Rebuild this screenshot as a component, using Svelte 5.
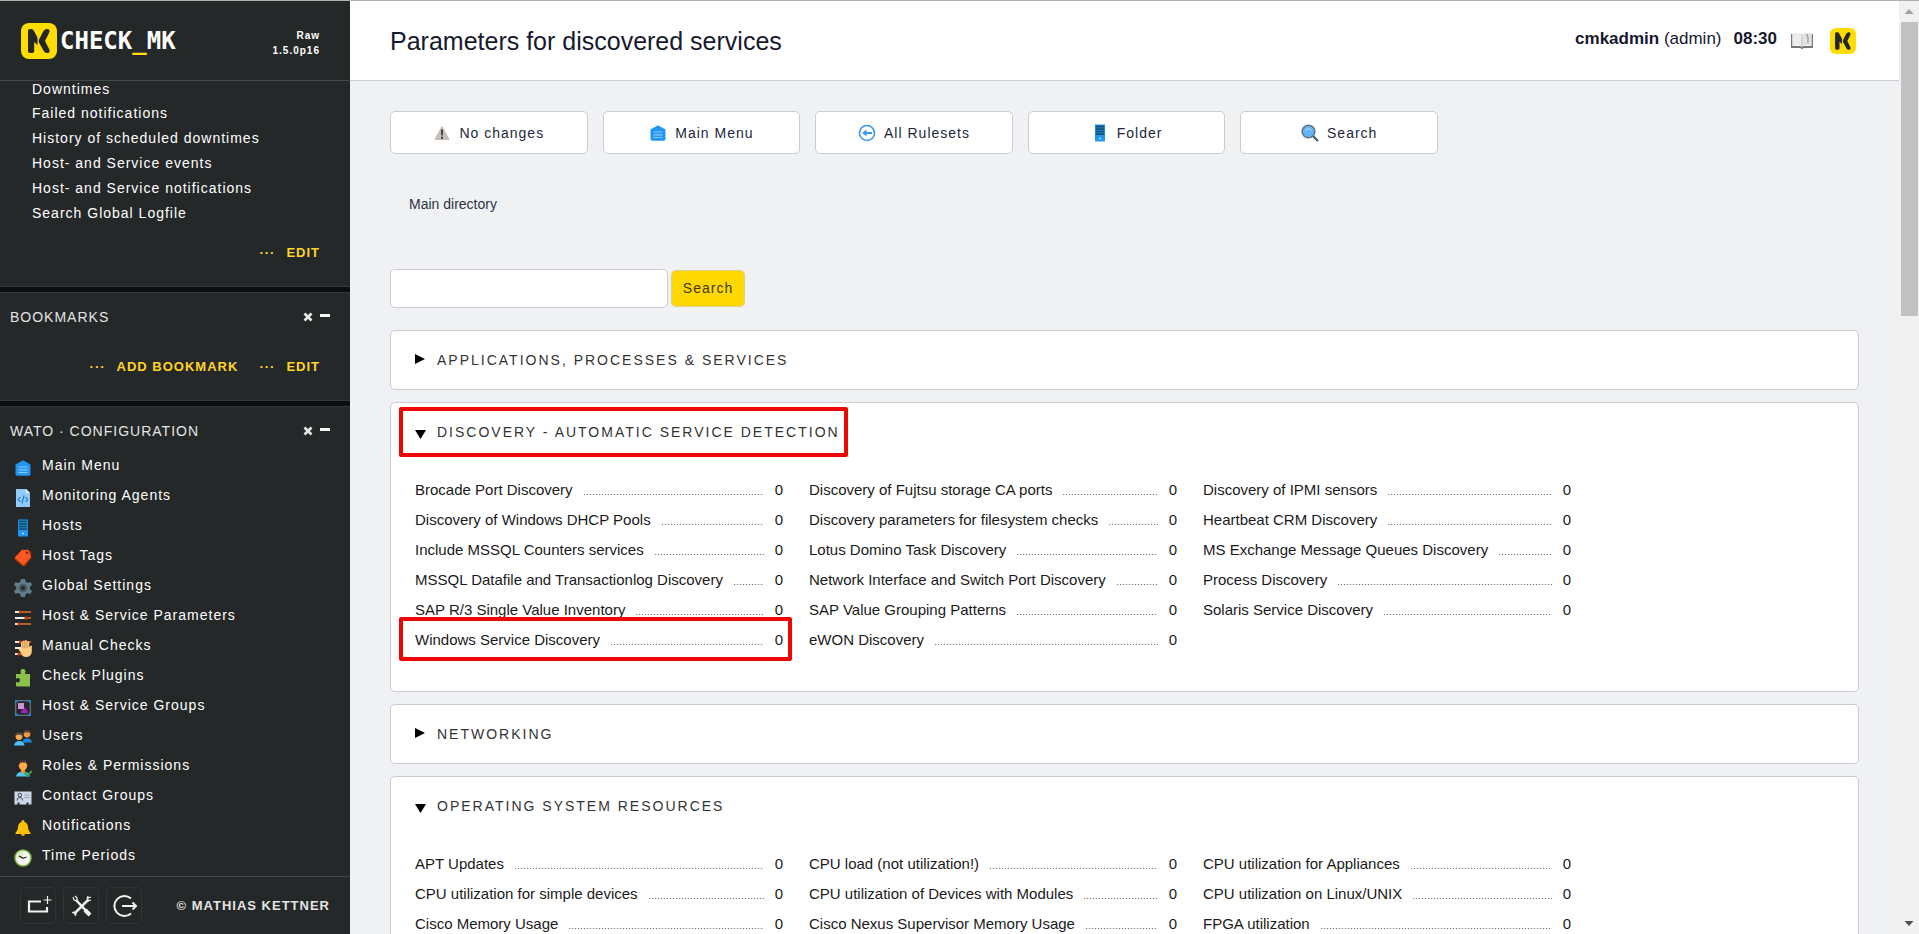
<script>
  const views = [
    'Downtimes',
    'Failed notifications',
    'History of scheduled downtimes',
    'Host- and Service events',
    'Host- and Service notifications',
    'Search Global Logfile'
  ];

  const wato = [
    ['menu', 'Main Menu'],
    ['agent', 'Monitoring Agents'],
    ['host', 'Hosts'],
    ['tag', 'Host Tags'],
    ['gear', 'Global Settings'],
    ['params', 'Host & Service Parameters'],
    ['manual', 'Manual Checks'],
    ['plugin', 'Check Plugins'],
    ['groups', 'Host & Service Groups'],
    ['users', 'Users'],
    ['roles', 'Roles & Permissions'],
    ['contact', 'Contact Groups'],
    ['bell', 'Notifications'],
    ['clock', 'Time Periods']
  ];

  const actions = [
    ['warning', 'No changes'],
    ['menu', 'Main Menu'],
    ['back', 'All Rulesets'],
    ['host', 'Folder'],
    ['search', 'Search']
  ];

  const panels = [
    { title: 'Applications, Processes & Services', open: false, rules: [] },
    {
      title: 'Discovery - automatic service detection',
      open: true,
      marked: true,
      rules: [
        'Brocade Port Discovery',
        'Discovery of Fujtsu storage CA ports',
        'Discovery of IPMI sensors',
        'Discovery of Windows DHCP Pools',
        'Discovery parameters for filesystem checks',
        'Heartbeat CRM Discovery',
        'Include MSSQL Counters services',
        'Lotus Domino Task Discovery',
        'MS Exchange Message Queues Discovery',
        'MSSQL Datafile and Transactionlog Discovery',
        'Network Interface and Switch Port Discovery',
        'Process Discovery',
        'SAP R/3 Single Value Inventory',
        'SAP Value Grouping Patterns',
        'Solaris Service Discovery',
        'Windows Service Discovery',
        'eWON Discovery'
      ]
    },
    { title: 'Networking', open: false, rules: [] },
    {
      title: 'Operating System Resources',
      open: true,
      rules: [
        'APT Updates',
        'CPU load (not utilization!)',
        'CPU utilization for Appliances',
        'CPU utilization for simple devices',
        'CPU utilization of Devices with Modules',
        'CPU utilization on Linux/UNIX',
        'Cisco Memory Usage',
        'Cisco Nexus Supervisor Memory Usage',
        'FPGA utilization'
      ]
    }
  ];
</script>

{#snippet badge()}
  <svg class="badge" viewBox="0 0 36 36" aria-hidden="true">
    <rect width="36" height="36" rx="8" fill="#ffdd00" />
    <path d="M7 8Q7 6 9 6H10.500Q12 6 12.700 7.500L16.500 14.500V22L13.200 19V28Q13.200 30 11.200 30H9Q7 30 7 28Z" fill="#252628" />
    <path d="M27 6Q29.500 7.500 28 10L24 18L28.300 26.500Q29.500 29 27 30Q24 30.500 22.700 28L18 19.500Q17.300 18 18 16.500L22.500 8Q24 5.500 27 6Z" fill="#252628" />
  </svg>
{/snippet}

{#snippet icon(name)}
  <svg class="icon" viewBox="0 0 18 18" aria-hidden="true">
    {#if name === 'menu'}
      <path d="M1.500 5.500L9 1.200L16.500 5.500V15Q16.500 16.800 14.700 16.800H3.300Q1.500 16.800 1.500 15Z" fill="#2196f3" />
      <path d="M4.500 8H13.500M4.500 10.800H13.500M4.500 13.500H13.500" stroke="#90caf9" stroke-width="1.200" />
    {:else if name === 'agent'}
      <path d="M2 0H12L16 4V18H2Z" fill="#90caf9" />
      <path d="M12 0V4H16Z" fill="#e1f5fe" />
      <path d="M6.500 8L4.200 10.500L6.500 13M11.500 8L13.800 10.500L11.500 13M10 6.500L8 14.500" fill="none" stroke="#1976d2" stroke-width="1.100" />
    {:else if name === 'host'}
      <path d="M4 0.500H14V17.500H4Z" fill="#2196f3" />
      <path d="M4.800 1.500H13.200V3.500H4.800ZM4.800 4.300H13.200V6H4.800ZM4.800 6.800H13.200V8.500H4.800ZM4.800 9.300H13.200V11H4.800Z" fill="#17516f" />
      <circle cx="9" cy="14.500" r="1" fill="#bbdefb" />
    {:else if name === 'tag'}
      <path d="M8.500 1L14.500 0.500L17 3.500L17.200 9L10.500 17.500L8.500 17L0.800 10.500V8.500Z" fill="#bf360c" />
      <path d="M8 0.800L14.500 1.200L16.800 8L9.500 16L0.800 8.500Z" fill="#ff5722" />
      <circle cx="13" cy="3.800" r="1.200" fill="#742408" />
    {:else if name === 'gear'}
      <path d="M7 0H11L11.600 2.800L14 4.100L16.600 3L18 6L15.800 8V10L18 12L16.400 15L13.700 14L11.600 15.200L11 18H7L6.400 15.200L4.200 14L1.500 15L0 12L2.200 10V8L0 6L1.500 3L4.200 4L6.400 2.800Z" fill="#607d8b" />
      <circle cx="9" cy="9" r="4.300" fill="#455a64" />
      <circle cx="9" cy="9" r="2" fill="#252829" />
    {:else if name === 'params' || name === 'manual'}
      <path d="M1 3H7M1 9H12M1 15H5" stroke="#eceff1" stroke-width="1.800" />
      <path d="M7 3H17M12 9H17M5 15H17" stroke="#e0702e" stroke-width="1.500" />
      <path d="M6 1.500V4.500M11.500 7.500V10.500M4.500 13.500V16.500" stroke="#dd2c00" stroke-width="2" />
      {#if name === 'manual'}
        <path d="M7 10V3.500Q7.800 2 8.800 3.500V2Q9.800 0.800 10.800 2V1.500Q12 0.300 13 2V2.500Q14.500 1.500 15.200 3V8L17 6.500Q18.500 7 17.800 8.500V13Q17 18 12 18Q8 18 7 14L4.500 10.500Q5 8.500 7 10Z" fill="#ffcc80" />
        <path d="M8.900 3V9M10.900 2V9M13 2.500V9" stroke="#a1672f" stroke-width=".6" />
      {/if}
    {:else if name === 'plugin'}
      <path d="M2 5H7Q5.500 0 9 0Q12.500 0 11 5H16V17.500H3Q2 17.500 2 16.500V13Q6 14.500 6 11Q6 8 2 9.500Z" fill="#8bc34a" />
    {:else if name === 'groups'}
      <rect x="1.700" y="1.700" width="14.600" height="14.600" fill="#28232e" stroke="#607d8b" stroke-width="1.200" />
      <path d="M1 1H3.500V3.500H1ZM14.500 1H17V3.500H14.500ZM1 14.500H3.500V17H1ZM14.500 14.500H17V17H14.500Z" fill="#1e88d2" />
      <rect x="4" y="4" width="6" height="6" fill="#ce93d8" />
      <path d="M7 14V12L11 8.500L14 12.500V14Z" fill="#9c27b0" />
    {:else if name === 'users'}
      <circle cx="13" cy="5" r="3.400" fill="#ef9a4b" />
      <path d="M9.600 5Q9.500 1 13 1Q16.500 1 16.500 5L15 3.500H11Z" fill="#5d4037" />
      <path d="M8 13.500Q9 9.500 13 9.500Q17.500 9.500 18 13.500Z" fill="#1e88e5" />
      <circle cx="5" cy="7.500" r="3.400" fill="#ffa94d" />
      <path d="M1.600 7.500Q1.500 3.500 5 3.500Q8.500 3.500 8.500 7.500L7 6H3Z" fill="#6d4c41" />
      <path d="M0 16.500Q1 12 5 12Q10 12 10.500 16.500Z" fill="#4fc3f7" />
    {:else if name === 'roles'}
      <path d="M2 17.500Q3 12.500 9 12.500Q15 12.500 16 17.500Z" fill="#4fc3f7" />
      <path d="M7 10H11V13L9 14.500L7 13Z" fill="#ff9800" />
      <ellipse cx="9" cy="6.500" rx="4.200" ry="5" fill="#ffa94d" />
      <path d="M4.800 6Q4.500 0.500 9 0.500Q13.500 0.500 13.200 6L11.500 3.500H7Z" fill="#4e342e" />
      <path d="M10.500 13.500L13.500 16.500L18 12" fill="none" stroke="#43a047" stroke-width="1.800" />
    {:else if name === 'contact'}
      <path d="M0.500 2.500H17.500V15.500H14.500V13.500H12.500V15.500H5.500V13.500H3.500V15.500H0.500Z" fill="#cfd8e8" />
      <circle cx="5.800" cy="6" r="1.800" fill="none" stroke="#37474f" />
      <path d="M3 11.500Q3 8.500 5.800 8.500Q8.600 8.500 8.600 11.500" fill="none" stroke="#37474f" />
      <path d="M10.500 6H15.500M10.500 8.500H15.500" stroke="#90a4ae" stroke-width=".9" />
    {:else if name === 'bell'}
      <path d="M9 1Q10.500 1 10.500 3Q14 4 14 8.500Q14 11.500 16.500 14V15H1.500V14Q4 11.500 4 8.500Q4 4 7.500 3Q7.500 1 9 1Z" fill="#ffc107" />
      <path d="M7 15H11Q11 17 9 17Q7 17 7 15Z" fill="#ffa000" />
    {:else if name === 'clock'}
      <circle cx="9" cy="9" r="8" fill="#f5f5f5" stroke="#7cb342" stroke-width="1.500" />
      <path d="M9 9V1.500A7.500 7.500 0 0 0 1.500 9Z" fill="#dcedc8" />
      <path d="M5 7L9 9.300L12.500 8" fill="none" stroke="#212121" stroke-width="1.300" />
    {:else if name === 'warning'}
      <path d="M9 2.500L16 15.500H2Z" fill="#c4bebb" stroke="#c4bebb" stroke-linejoin="round" />
      <path d="M8 5.500H10L9.700 11.500H8.300ZM8 12.800H10V14.800H8Z" fill="#333" />
    {:else if name === 'back'}
      <circle cx="9" cy="9" r="7.500" fill="#fff" stroke="#3a96f0" stroke-width="1.600" />
      <path d="M14 9H7" stroke="#3a96f0" stroke-width="2" />
      <path d="M4 9L8.500 5.500V12.500Z" fill="#3a96f0" />
    {:else if name === 'search'}
      <path d="M11.500 11.500L17 17" stroke="#455a64" stroke-width="2.200" />
      <circle cx="7.500" cy="7.500" r="6.300" fill="#64b5f6" stroke="#60758a" stroke-width="1.600" />
      <path d="M4.500 6.500Q7.500 3 10.500 6.500" fill="none" stroke="#bbdefb" />
    {/if}
  </svg>
{/snippet}

{#snippet snapinHead(title)}
  <header class="snapin-head">
    <h2>{title}</h2>
    <button type="button" aria-label="Remove {title}">
      <svg viewBox="0 0 10 10"><path d="M1.500 1.500L8.500 8.500M8.500 1.500L1.500 8.500" stroke="#e8e8e8" stroke-width="2.600" /></svg>
    </button>
    <button type="button" aria-label="Collapse {title}">
      <svg viewBox="0 0 10 10"><path d="M0 3.500H10" stroke="#f4f4f4" stroke-width="3" /></svg>
    </button>
  </header>
{/snippet}

<div class="page">
  <aside class="sidebar">
    <div class="brand">
      {@render badge()}
      <span class="wordmark">CHECK<b>_</b>MK</span>
      <span class="version">Raw<br />1.5.0p16</span>
    </div>

    <div class="snapins">
      <section class="snapin views">
        <ul>
          {#each views as view}
            <li><a href="#view">{view}</a></li>
          {/each}
        </ul>
        <div class="links"><a href="#edit">Edit</a></div>
      </section>

      <section class="snapin">
        {@render snapinHead('Bookmarks')}
        <div class="links bookmarks"><a href="#add">Add Bookmark</a><a href="#edit">Edit</a></div>
      </section>

      <section class="snapin">
        {@render snapinHead('WATO · Configuration')}
        <ul class="wato">
          {#each wato as [name, label]}
            <li><a href="#wato">{@render icon(name)}<span>{label}</span></a></li>
          {/each}
        </ul>
      </section>
    </div>

    <footer>
      <button type="button" aria-label="Add snapin">
        <svg viewBox="-1 0 24 24"><path d="M14 7.500H2V17.500H20V13" fill="none" stroke="#f2f2f2" stroke-width="2.200" /><path d="M20.500 2V10M16.500 6H24.500" stroke="#f2f2f2" stroke-width="1.200" /></svg>
      </button>
      <button type="button" aria-label="Edit profile">
        <svg viewBox="-1 0 24 24"><path d="M6 6L19 20M18 6L4 20" stroke="#f2f2f2" stroke-width="2.500" fill="none" /><path d="M3 3L4 6L7 7L7 4L5 2M21 3L18 4V7L21 6M18 2L17 5M2 19L4 18L6 20L5 22" stroke="#f2f2f2" stroke-width="1.200" fill="none" /><path d="M15 16L20 21" stroke="#f2f2f2" stroke-width="4" /></svg>
      </button>
      <button type="button" aria-label="Log out">
        <svg viewBox="-1 0 24 24"><path d="M18 4.500A10 10 0 1 0 18 19.500" fill="none" stroke="#f2f2f2" stroke-width="2" /><path d="M9 12H23M19.500 8.500L23 12L19.500 15.500" fill="none" stroke="#f2f2f2" stroke-width="2" /></svg>
      </button>
      <a href="#about">© Mathias Kettner</a>
    </footer>
  </aside>

  <main>
    <header class="top">
      <h1>Parameters for discovered services</h1>
      <p><b>cmkadmin</b> (admin)</p>
      <b class="time">08:30</b>
      <svg class="book" viewBox="0 0 22 18" aria-hidden="true">
        <path d="M0 2H1.500V14H9.500L11 15L12.500 14H20.500V2H22V16H12.500L11 17.500L9.500 16H0Z" fill="#777" />
        <path d="M1.500 1.500Q7 0.500 10.500 2V14Q7 12.500 1.500 14Z" fill="#ececec" />
        <path d="M20.500 1.500Q15 0.500 11.500 2V14Q15 12.500 20.500 14Z" fill="#e2e2e2" />
        <path d="M11 2V15" stroke="#aaa" stroke-width=".8" />
        <path d="M15.500 5H17V11" fill="none" stroke="#999" stroke-width="1.200" />
        <path d="M15.500 2.500H17V4H15.500Z" fill="#888" />
      </svg>
      {@render badge()}
    </header>

    <div class="content">
      <nav class="actions">
        {#each actions as [name, label]}
          <a href="#action">{@render icon(name)}<span>{label}</span></a>
        {/each}
      </nav>

      <div class="crumb">Main directory</div>

      <form onsubmit={(event) => event.preventDefault()}>
        <input type="text" aria-label="Search rulesets" />
        <button type="submit">Search</button>
      </form>

      {#each panels as panel}
        <section class="panel">
          <h3 class:marked={panel.marked}>
            <svg viewBox="0 0 11 14" aria-hidden="true">
              {#if panel.open}
                <path d="M0 5H11L5.500 14Z" />
              {:else}
                <path d="M0 1L10 6L0 11Z" />
              {/if}
            </svg>
            {panel.title}
          </h3>
          {#if panel.open}
            <div class="rules">
              {#each panel.rules as rule}
                <div class="rule" class:framed={rule === 'Windows Service Discovery'}>
                  <a href="#rule">{rule}</a>
                  <span class="dots"></span>
                  <span class="count">0</span>
                </div>
              {/each}
            </div>
          {/if}
        </section>
      {/each}
    </div>
  </main>

  <div class="scrollbar" aria-hidden="true">
    <svg viewBox="0 0 20 20"><path d="M5.500 13L10 8L14.500 13Z" fill="#a3a3a3" /></svg>
    <div class="track"><div class="thumb"></div></div>
    <svg viewBox="0 0 20 20"><path d="M5.500 7L10 12L14.500 7Z" fill="#505050" /></svg>
  </div>
</div>

<style>
  :global(body) {
    margin: 0;
    overflow: hidden;
  }

  .page {
    display: flex;
    box-sizing: border-box;
    height: 100vh;
    overflow: hidden;
    border-top: 1px solid #b0b0b0;
    background: #eff1f3;
    color: #1a1a1a;
    font: 15px/20px "Liberation Sans", Arial, sans-serif;
  }

  .page * {
    box-sizing: border-box;
  }

  a {
    color: inherit;
    text-decoration: none;
  }

  ul {
    margin: 0;
    padding: 0;
    list-style: none;
  }

  h1,
  h2,
  h3,
  p {
    margin: 0;
    font-weight: normal;
  }

  button {
    padding: 0;
    border: 0;
    background: none;
    font: inherit;
  }

  svg {
    display: block;
    flex: none;
  }

  .icon {
    width: 18px;
    height: 18px;
  }

  .sidebar {
    display: flex;
    flex: none;
    flex-direction: column;
    width: 350px;
    background: #252829;
    color: #fff;
    font-size: 14px;
  }

  .brand {
    display: flex;
    align-items: center;
    flex: none;
    height: 80px;
    padding: 0 30px 0 21px;
    border-bottom: 1px solid #44484a;
  }

  .brand .badge {
    width: 36px;
    height: 36px;
  }

  .wordmark {
    margin-left: 3px;
    font: bold 24px/36px "DejaVu Sans Mono", monospace;
  }

  .wordmark b {
    color: #ffdd00;
  }

  .version {
    margin-left: auto;
    padding-top: 4px;
    font-size: 10px;
    font-weight: bold;
    line-height: 15px;
    letter-spacing: 1px;
    text-align: right;
  }

  .snapins {
    flex: 1;
    min-height: 0;
    overflow: hidden;
  }

  .snapin {
    margin-bottom: 5px;
    border-top: 1px solid #34383a;
    border-bottom: 1px solid #34383a;
    box-shadow: 0 5px #0b0e0f;
    letter-spacing: 1px;
  }

  .views {
    border-top: 0;
  }

  .views ul {
    padding-left: 32px;
    line-height: 25px;
  }

  .views li:first-child {
    line-height: 16px;
    padding-bottom: 4px;
  }

  .links {
    display: flex;
    justify-content: flex-end;
    gap: 21px;
    padding: 17px 30px 23px 0;
    color: #ffd526;
    font-size: 13px;
    font-weight: bold;
    text-transform: uppercase;
  }

  .links a::before {
    content: "···";
    margin-right: 11px;
  }

  .links.bookmarks {
    padding-top: 20px;
  }

  .snapin-head {
    display: flex;
    gap: 7px;
    padding: 14px 20px 10px 10px;
    color: #e4e4e4;
  }

  .snapin-head h2 {
    flex: 1;
    font-size: 14px;
    line-height: 20px;
    text-transform: uppercase;
  }

  .snapin-head svg {
    width: 10px;
    height: 10px;
  }

  .wato {
    padding: 0 14px 20px;
  }

  .wato a {
    display: flex;
    gap: 10px;
    height: 30px;
  }

  .wato .icon {
    margin-top: 8px;
  }

  .wato span {
    line-height: 28px;
  }

  footer {
    display: flex;
    align-items: center;
    flex: none;
    gap: 7px;
    height: 58px;
    padding: 0 20px;
    border-top: 1px solid #44484a;
  }

  footer button {
    display: grid;
    place-items: center;
    width: 36px;
    height: 37px;
    border: 1px solid #303435;
    border-radius: 5px;
  }

  footer svg {
    width: 24px;
    height: 24px;
    overflow: visible;
  }

  footer a {
    margin-left: auto;
    color: #e4e4e4;
    font-size: 13px;
    font-weight: bold;
    letter-spacing: 1px;
    text-transform: uppercase;
  }

  main {
    flex: 1;
    min-width: 0;
    overflow: hidden;
  }

  .top {
    display: flex;
    align-items: center;
    height: 80px;
    padding: 0 43px 0 40px;
    border-bottom: 1px solid #c9ccd5;
    background: #fff;
    color: #17192e;
    font-size: 17px;
  }

  .top h1 {
    flex: 1;
    font-size: 25px;
    line-height: 30px;
  }

  .top p,
  .time {
    padding-bottom: 4px;
  }

  .time {
    margin: 0 14px 0 12px;
  }

  .book {
    width: 22px;
    height: 18px;
  }

  .top .badge {
    width: 26px;
    height: 26px;
    margin-left: 17px;
  }

  .content {
    padding: 30px 40px;
  }

  .actions {
    display: grid;
    grid-template-columns: repeat(5, 1fr);
    gap: 15px;
    max-width: 1048px;
  }

  .actions a {
    display: flex;
    align-items: center;
    justify-content: center;
    gap: 8px;
    height: 43px;
    border: 1px solid #c9ccd5;
    border-radius: 5px;
    background: #fff;
    color: #22283a;
    font-size: 14px;
    letter-spacing: 1px;
  }

  .crumb {
    margin: 40px 19px 55px;
    color: #2d3143;
    font-size: 14px;
  }

  form {
    display: flex;
    align-items: center;
    gap: 3px;
    margin-bottom: 22px;
  }

  input {
    width: 278px;
    height: 39px;
    border: 1px solid #c9ccd5;
    border-radius: 5px;
    background: #fff;
  }

  form button {
    width: 74px;
    height: 37px;
    padding-bottom: 2px;
    border: 1px solid #dccf94;
    border-radius: 5px;
    background: #ffd703;
    color: #403a17;
    font-size: 14px;
    letter-spacing: 1px;
  }

  .panel {
    margin-bottom: 12px;
    padding: 4px 8px;
    border: 1px solid #c9ccd5;
    border-radius: 5px;
    background: #fff;
  }

  h3 {
    display: flex;
    align-items: center;
    gap: 11px;
    width: max-content;
    height: 50px;
    padding: 0 8px 0 16px;
    color: #333;
    font-size: 14px;
    letter-spacing: 2px;
    text-transform: uppercase;
  }

  h3 svg {
    width: 11px;
    height: 14px;
    fill: #000;
  }

  .marked {
    outline: 4px solid #f00505;
    outline-offset: -4px;
    border-radius: 2px;
  }

  .rules {
    display: grid;
    grid-template-columns: repeat(3, 394px);
    padding: 18px 0 32px;
  }

  .rule {
    display: flex;
    align-items: center;
    height: 30px;
    padding: 0 10px 0 16px;
  }

  .framed {
    position: relative;
  }

  /* Highlight frame drawn over the row and its neighbours. */
  .framed::after {
    content: "";
    position: absolute;
    inset: -8px 1px -6px 0;
    border: 4px solid #f00505;
    border-radius: 2px;
    pointer-events: none;
  }

  .dots {
    flex: 1;
    height: 1px;
    margin: 9px 11px 0;
    background: repeating-linear-gradient(90deg, #777 0 1px, #eee 1px 3px);
  }

  .scrollbar {
    display: flex;
    flex: none;
    flex-direction: column;
    width: 20px;
    background: #f1f1f1;
  }

  .track {
    flex: 1;
    padding: 1px 1px 0 2px;
  }

  .thumb {
    height: 33%;
    background: #c1c1c1;
  }
</style>
